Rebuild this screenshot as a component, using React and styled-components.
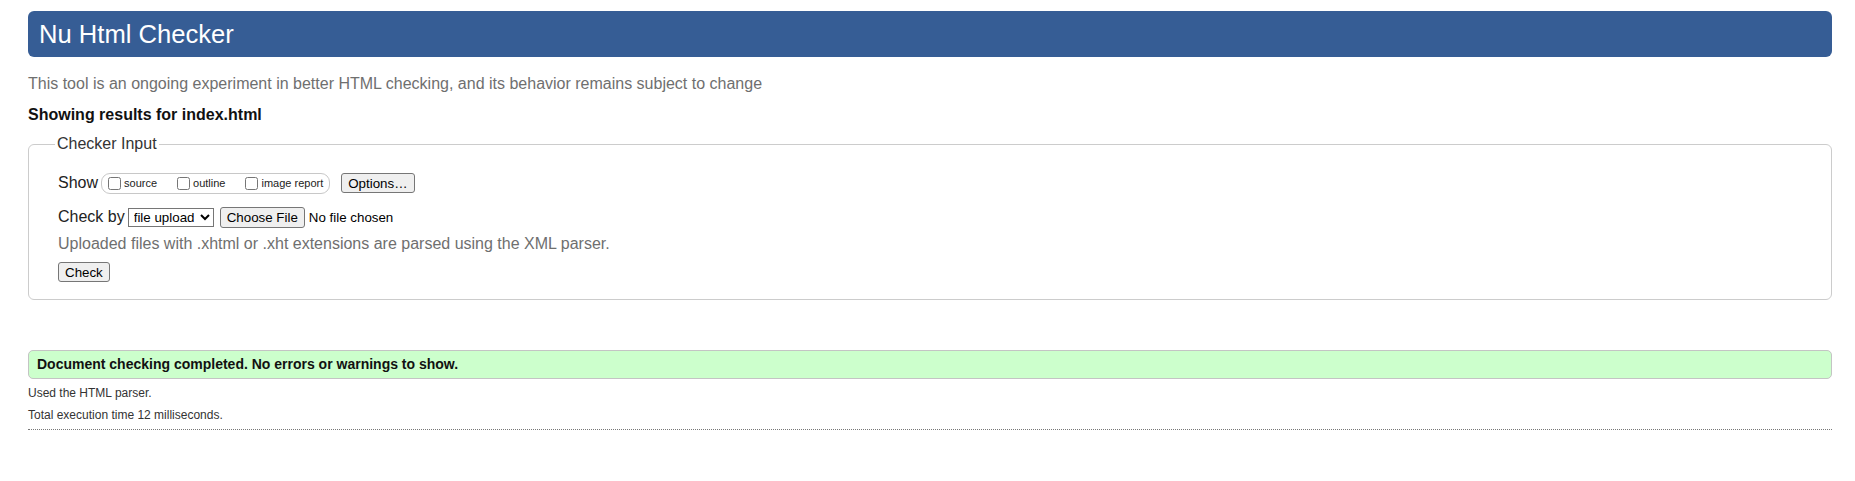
import React from 'react'
import styled, { createGlobalStyle } from 'styled-components'

const Global = createGlobalStyle`
    html, body {
        margin: 0;
        padding: 0;
        background: #fff;
    }
    body {
        font-family: "Liberation Sans", Arial, sans-serif;
        color: #222;
    }
`

function App() {
    return (
        <Page>
            <Global />
            <Title>Nu Html Checker</Title>
            <Intro>This tool is an ongoing experiment in better HTML checking, and its behavior remains subject to change</Intro>
            <Results>Showing results for index.html</Results>

            <Fieldset>
                <Legend>Checker Input</Legend>
                <Row>
                    <Label>Show</Label>
                    <ShowGroup>
                        <Option><input type="checkbox" />source</Option>
                        <Option><input type="checkbox" />outline</Option>
                        <Option last><input type="checkbox" />image report</Option>
                    </ShowGroup>
                    <Button>Options…</Button>
                </Row>
                <Row top={12}>
                    <Label>Check by</Label>
                    <Select defaultValue="file">
                        <option value="file">file upload</option>
                        <option value="address">address</option>
                        <option value="text">text input</option>
                    </Select>
                    <Button tall>Choose File</Button>
                    <FileName>No file chosen</FileName>
                </Row>
                <Hint>Uploaded files with .xhtml or .xht extensions are parsed using the XML parser.</Hint>
                <Row top={7}>
                    <Button>Check</Button>
                </Row>
            </Fieldset>

            <Success>Document checking completed. No errors or warnings to show.</Success>
            <Details>
                <p>Used the HTML parser.</p>
                <p>Total execution time 12 milliseconds.</p>
            </Details>
            <Rule />
        </Page>
    )
}

const Page = styled.div`
    padding: 11px 23px 40px 28px;
`
const Title = styled.h1`
    margin: 0;
    height: 46px;
    line-height: 46px;
    padding: 0 11px;
    background: #365d95;
    color: #fff;
    font-size: 25.6px;
    font-weight: normal;
    border-radius: 6px;
`
const Intro = styled.p`
    margin: 17px 0 0;
    font-size: 16px;
    line-height: 20px;
    color: #6f6f6f;
`
const Results = styled.p`
    margin: 11px 0 0;
    font-size: 16px;
    line-height: 20px;
    font-weight: bold;
    color: #111;
`
const Fieldset = styled.fieldset`
    margin: 9px 0 0;
    padding: 18px 20px 16px 29px;
    border: 1px solid #cccccc;
    border-radius: 6px;
    min-width: 0;
`
const Legend = styled.legend`
    margin-left: -3px;
    padding: 0 2px;
    font-size: 16px;
    line-height: 20px;
    color: #333;
`
const Row = styled.div`
    display: flex;
    align-items: center;
    height: 22px;
    margin-top: ${p => p.top || 0}px;
`
const Label = styled.span`
    font-size: 16px;
    color: #222;
    margin-right: 3px;
`
const ShowGroup = styled.span`
    display: flex;
    align-items: center;
    height: 19px;
    padding: 0 6px 0 6px;
    border: 1px solid #c8c8c8;
    border-radius: 9px;
    margin-right: 11px;
`
const Option = styled.label`
    display: flex;
    align-items: center;
    font-size: 11px;
    color: #222;
    margin-right: ${p => p.last ? 0 : 20}px;

    & > input {
        width: 13px;
        height: 13px;
        margin: 0 3px 0 0;
    }
`
const Button = styled.button`
    height: ${p => p.tall ? 21 : 20}px;
    padding: 0 6px;
    font-family: "Liberation Sans", Arial, sans-serif;
    font-size: 13.333px;
    color: #000;
    background: #efefef;
    border: 1px solid #767676;
    border-radius: 3px;
`
const Select = styled.select`
    height: 19px;
    width: 86px;
    margin: 0 6px 0 0;
    padding: 0 0 0 1px;
    font-family: "Liberation Sans", Arial, sans-serif;
    font-size: 13.333px;
    color: #000;
    background: #fff;
    border: 1px solid #767676;
    border-radius: 0;
`
const FileName = styled.span`
    margin-left: 4px;
    font-size: 13.333px;
    color: #000;
`
const Hint = styled.p`
    margin: 6px 0 0;
    font-size: 16px;
    line-height: 20px;
    color: #6f6f6f;
`
const Success = styled.div`
    margin-top: 50px;
    height: 27px;
    line-height: 27px;
    padding: 0 8px;
    background: #ccffcc;
    border: 1px solid #c4c4c4;
    border-radius: 5px;
    font-size: 14px;
    font-weight: bold;
    color: #111;
`
const Details = styled.div`
    margin-top: 6px;
    & > p {
        margin: 0 0 6px;
        font-size: 12px;
        line-height: 16px;
        color: #333;
    }
`
const Rule = styled.div`
    margin-top: 2px;
    border-top: 1px dotted #777;
`

export default App
